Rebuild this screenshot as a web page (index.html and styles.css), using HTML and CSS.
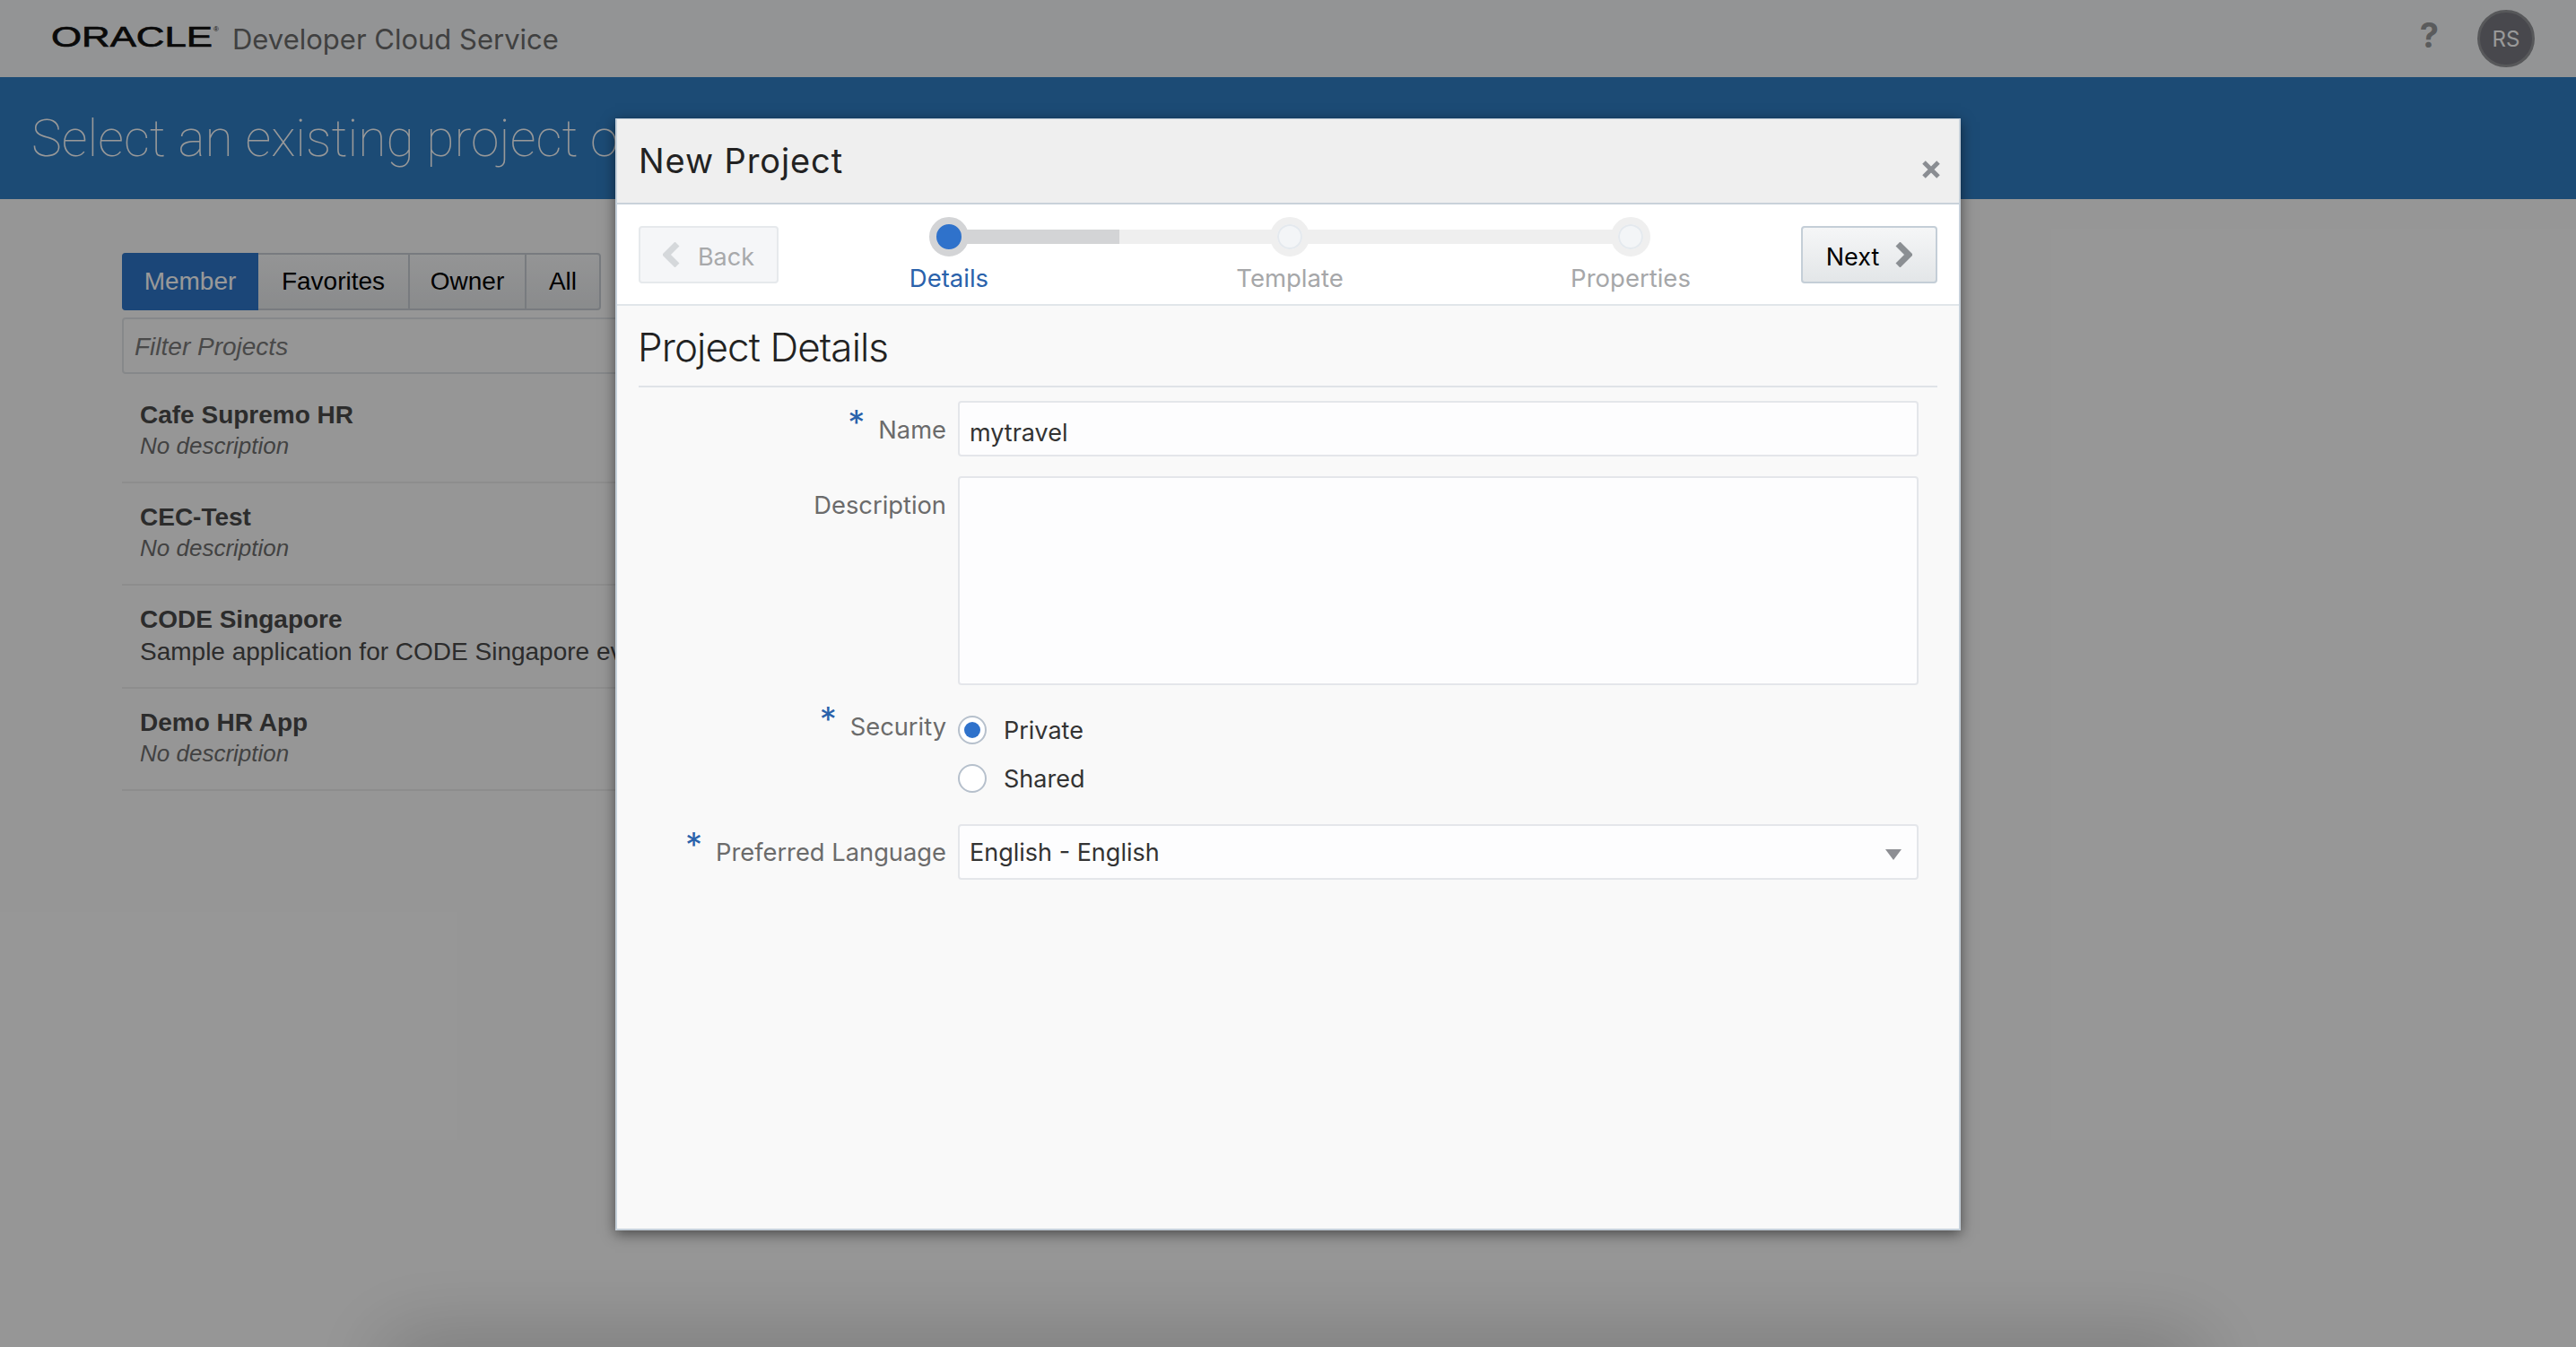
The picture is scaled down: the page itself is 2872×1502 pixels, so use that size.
FILE: index.html
```html
<!DOCTYPE html>
<html lang="en">
<head>
  <meta charset="utf-8">
  <title>Oracle Developer Cloud Service</title>
  <link rel="stylesheet" href="styles.css">
</head>
<body>
  <!-- top bar -->
  <header class="topbar">
    <div class="brand">
      <svg class="logo" width="190" height="40" viewBox="0 0 190 40">
        <text x="0" y="29" textLength="180" lengthAdjust="spacingAndGlyphs">ORACLE</text>
        <text class="logo-r" x="181" y="12">®</text>
      </svg>
      <span class="brand-name">Developer Cloud Service</span>
    </div>
    <div class="topbar-right">
      <span class="help">?</span>
      <span class="avatar">RS</span>
    </div>
  </header>

  <div class="hero">Select an existing project o</div>

  <main class="projects">
    <div class="tabs">
      <a class="tab tab-active">Member</a>
      <a class="tab">Favorites</a>
      <a class="tab">Owner</a>
      <a class="tab">All</a>
    </div>
    <div class="filter">Filter Projects</div>
    <ul class="project-list">
      <li>
        <div class="project-name">Cafe Supremo HR</div>
        <div class="project-desc empty">No description</div>
      </li>
      <li>
        <div class="project-name">CEC-Test</div>
        <div class="project-desc empty">No description</div>
      </li>
      <li>
        <div class="project-name">CODE Singapore</div>
        <div class="project-desc">Sample application for CODE Singapore ev</div>
      </li>
      <li>
        <div class="project-name">Demo HR App</div>
        <div class="project-desc empty">No description</div>
      </li>
    </ul>
  </main>

  <div class="page-shadow"></div>
  <div class="scrim"></div>

  <!-- dialog -->
  <section class="modal">
    <div class="modal-head">
      <h2>New Project</h2>
      <svg class="close" width="20" height="20" viewBox="0 0 20 20">
        <path d="M2 2 L18 18 M18 2 L2 18"/>
      </svg>
    </div>

    <div class="wizard">
      <button class="btn btn-disabled">
        <svg class="chev" width="20" height="28" viewBox="0 0 20 28"><path d="M16 2 L4 14 L16 26"/></svg>
        <span>Back</span>
      </button>

      <div class="steps">
        <div class="step step-current">
          <span class="dot"></span>
          <span class="step-label">Details</span>
        </div>
        <div class="step">
          <span class="dot"></span>
          <span class="step-label">Template</span>
        </div>
        <div class="step step-last">
          <span class="dot"></span>
          <span class="step-label">Properties</span>
        </div>
      </div>

      <button class="btn btn-next">
        <span>Next</span>
        <svg class="chev" width="20" height="28" viewBox="0 0 20 28"><path d="M4 2 L16 14 L4 26"/></svg>
      </button>
    </div>

    <div class="modal-body">
      <h3>Project Details</h3>
      <form class="form">
        <label class="lbl req">Name</label>
        <div class="field">mytravel</div>

        <label class="lbl">Description</label>
        <div class="field field-area"></div>

        <label class="lbl req lbl-radio">Security</label>
        <div class="radios">
          <div class="radio-row"><span class="radio radio-on"></span>Private</div>
          <div class="radio-row"><span class="radio"></span>Shared</div>
        </div>

        <label class="lbl req lbl-select">Preferred Language</label>
        <div class="field field-select">English - English<span class="caret"></span></div>
      </form>
    </div>
  </section>
</body>
</html>
```

FILE: styles.css
```css
* {
  box-sizing: border-box;
}

html,
body {
  height: 100%;
}

body {
  margin: 0;
  overflow: hidden;
  background-color: #fbfbfb;
  font-family: "Liberation Sans", Arial, sans-serif;
}

/* top bar */
.topbar {
  display: flex;
  justify-content: space-between;
  align-items: center;
  height: 86px;
  padding: 0 46px 0 57px;
  background-color: #f5f7f9;
}

.brand {
  display: flex;
  align-items: center;
}

.logo text {
  font-family: "Liberation Sans", Arial, sans-serif;
  font-size: 32px;
  fill: #111;
  stroke: #111;
  stroke-width: 0.7;
}

.logo .logo-r {
  font-size: 8px;
  stroke: none;
}

.brand-name {
  margin-left: 12px;
  font-family: Inter, sans-serif;
  font-size: 31px;
  color: #6b6b6b;
}

.topbar-right {
  display: flex;
  align-items: center;
}

.help {
  margin: 0 43px 8px 0;
  font-family: Inter, sans-serif;
  font-size: 38px;
  font-weight: 700;
  color: #96989a;
}

.avatar {
  display: flex;
  justify-content: center;
  align-items: center;
  width: 64px;
  height: 64px;
  border: 3px solid #929397;
  border-radius: 50%;
  background-color: #787880;
  font-family: Inter, sans-serif;
  font-size: 24px;
  color: #fff;
}

/* blue band */
.hero {
  height: 136px;
  padding: 34px 0 0 35px;
  background-color: #2f7dc3;
  font-family: Roboto, sans-serif;
  font-size: 57px;
  font-weight: 100;
  line-height: 70px;
  color: #fff;
  white-space: nowrap;
}

/* project list */
.projects {
  width: 1000px;
  margin: 60px 0 0 136px;
}

.tabs {
  display: flex;
  width: 534px;
  height: 64px;
  border: 2px solid #c8ced4;
  border-radius: 4px;
  background: linear-gradient(#f7f8f9, #e6e8ea);
}

.tab {
  display: flex;
  align-items: center;
  justify-content: center;
  margin-top: -2px;
  margin-bottom: -2px;
  border-right: 2px solid #c8ced4;
  font-size: 28px;
  color: #000;
}

.tab:nth-child(1) {
  width: 152px;
  margin-left: -2px;
  border-right: 0;
  border-radius: 4px 0 0 4px;
  background-color: #2d75c8;
  color: #fff;
}

.tab:nth-child(2) {
  width: 169px;
}

.tab:nth-child(3) {
  width: 130px;
}

.tab:nth-child(4) {
  flex: 1;
  border-right: 0;
}

.filter {
  height: 63px;
  margin-top: 8px;
  padding-left: 12px;
  border: 2px solid #e0e3e6;
  border-radius: 4px;
  font-size: 28px;
  font-style: italic;
  line-height: 61px;
  color: #7a7a7a;
}

.project-list {
  margin: 7px 0 0;
  padding: 0;
  list-style: none;
}

.project-list li {
  height: 114.3px;
  padding: 20px 0 0 20px;
  border-bottom: 2px solid #ececec;
}

.project-list li:first-child {
  height: 115px;
  padding-top: 21px;
}

.project-name {
  font-size: 28px;
  font-weight: 700;
  line-height: 35px;
  color: #4a4a4a;
}

.project-desc {
  font-size: 28px;
  line-height: 38px;
  color: #4a4a4a;
  white-space: nowrap;
}

.project-desc.empty {
  font-size: 26px;
  font-style: italic;
  line-height: 34px;
  color: #6f6f6f;
}

/* the band of shadow coming up from under the fold */
.page-shadow {
  position: absolute;
  left: 438px;
  top: 1502px;
  width: 2006px;
  height: 60px;
  box-shadow: 0 0 90px 10px rgba(0, 0, 0, 0.2);
}

.scrim {
  position: absolute;
  left: 0;
  top: 0;
  width: 100%;
  height: 100%;
  background-color: rgba(0, 0, 0, 0.4);
}

/* dialog */
.modal {
  position: absolute;
  left: 686px;
  top: 132px;
  display: flex;
  flex-direction: column;
  width: 1500px;
  height: 1240px;
  border: 2px solid #c5d0da;
  border-width: 1px 2px 2px;
  background-color: #f9f9f9;
  font-family: Inter, sans-serif;
  box-shadow: 0 4px 14px rgba(0, 0, 0, 0.5);
}

.modal-head {
  display: flex;
  justify-content: space-between;
  height: 95px;
  padding: 0 21px 0 24px;
  border-bottom: 2px solid #c9d2da;
  background-color: #efefef;
}

.modal-head h2 {
  margin: 0;
  font-size: 38px;
  font-weight: 400;
  line-height: 92px;
  letter-spacing: 0.9px;
  color: #222;
}

.close {
  margin-top: 46px;
}

.close path {
  fill: none;
  stroke: #8a8d92;
  stroke-width: 5;
}

.wizard {
  display: flex;
  align-items: flex-start;
  height: 113px;
  padding: 0 24px;
  border-bottom: 2px solid #e1e6ea;
  background-color: #fff;
}

.btn {
  display: flex;
  align-items: center;
  justify-content: center;
  gap: 19px;
  width: 156px;
  height: 64px;
  margin-top: 24px;
  padding: 4px 0 0;
  border: 2px solid #c4ced7;
  border-radius: 4px;
  background: linear-gradient(#f5f6f7, #e3e6e8);
  font-family: Inter, sans-serif;
  font-size: 27px;
  color: #000;
}

.btn .chev {
  margin-top: -4px;
}

.btn-next {
  width: 152px;
  gap: 17px;
}

.btn-disabled {
  border-color: #e6e9ec;
  background: #f5f6f8;
  color: #a8a9ab;
}

.chev path {
  fill: none;
  stroke: #8b8f93;
  stroke-width: 7;
}

.btn-disabled .chev path {
  stroke: #d5d8db;
}

/* stepper */
.steps {
  display: flex;
  flex: 1;
  padding-top: 14px;
}

.step {
  position: relative;
  display: flex;
  flex: 1;
  flex-direction: column;
  align-items: center;
}

.step::after {
  content: "";
  position: absolute;
  left: 50%;
  top: 14px;
  width: 100%;
  height: 16px;
  background-color: #efefef;
}

.step-current::before {
  content: "";
  position: absolute;
  left: 50%;
  top: 14px;
  z-index: 1;
  width: 190px;
  height: 16px;
  background-color: #d3d4d6;
}

.step-last::after {
  display: none;
}

.dot {
  position: relative;
  z-index: 2;
  width: 44px;
  height: 44px;
  border: 8px solid #efefef;
  border-radius: 50%;
  background-color: #f3f5f7;
  box-shadow: inset 0 0 0 2px #e4e9ee;
}

.step-current .dot {
  border-color: #d3d4d6;
  background-color: #2f72cb;
  box-shadow: none;
}

.step-label {
  margin-top: 6px;
  font-size: 27.5px;
  line-height: 36px;
  color: #a6a7a9;
}

.step-current .step-label {
  color: #2a62ab;
}

/* form */
.modal-body {
  flex: 1;
  padding: 0 24px;
}

.modal-body h3 {
  margin: 0;
  height: 91px;
  border-bottom: 2px solid #dfe3e7;
  font-size: 44px;
  font-weight: 300;
  line-height: 92px;
  letter-spacing: -0.9px;
  text-indent: -1px;
  color: #222;
}

.form {
  display: grid;
  grid-template-columns: 343px 1071px;
  column-gap: 13px;
  align-items: start;
  margin-top: 15px;
  font-size: 27px;
}

.lbl {
  position: relative;
  justify-self: end;
  margin-top: 16px;
  font-size: 27.3px;
  line-height: 34px;
  color: #6b6b6b;
}

.req::before {
  content: "*";
  position: absolute;
  left: -34px;
  top: -15px;
  font-size: 38px;
  line-height: 46px;
  color: #2a62ab;
}

.lbl-radio {
  margin-top: -4px;
}

.lbl-select {
  margin-top: 15px;
}

.field {
  height: 62px;
  margin-bottom: 22px;
  padding: 4px 0 0 11px;
  border: 2px solid #e4e6ea;
  border-radius: 4px;
  background-color: #fdfdfe;
  line-height: 60px;
  color: #333;
}

.field-area {
  height: 233px;
  margin-bottom: 34px;
}

.field-select {
  position: relative;
  margin-bottom: 0;
  padding-top: 0;
}

.caret {
  position: absolute;
  right: 17px;
  top: 26px;
  width: 0;
  height: 0;
  border-top: 12px solid #8d8e93;
  border-left: 9px solid transparent;
  border-right: 9px solid transparent;
}

.radios {
  margin-bottom: 35px;
}

.radio-row {
  display: flex;
  align-items: center;
  gap: 19px;
  height: 32px;
  color: #333;
}

.radio-row + .radio-row {
  margin-top: 22px;
}

.radio {
  position: relative;
  width: 32px;
  height: 32px;
  border: 2px solid #b6c0cc;
  border-radius: 50%;
  background-color: #fff;
}

.radio-on::after {
  content: "";
  position: absolute;
  left: 5px;
  top: 5px;
  width: 18px;
  height: 18px;
  border-radius: 50%;
  background-color: #2f72cb;
}
```
